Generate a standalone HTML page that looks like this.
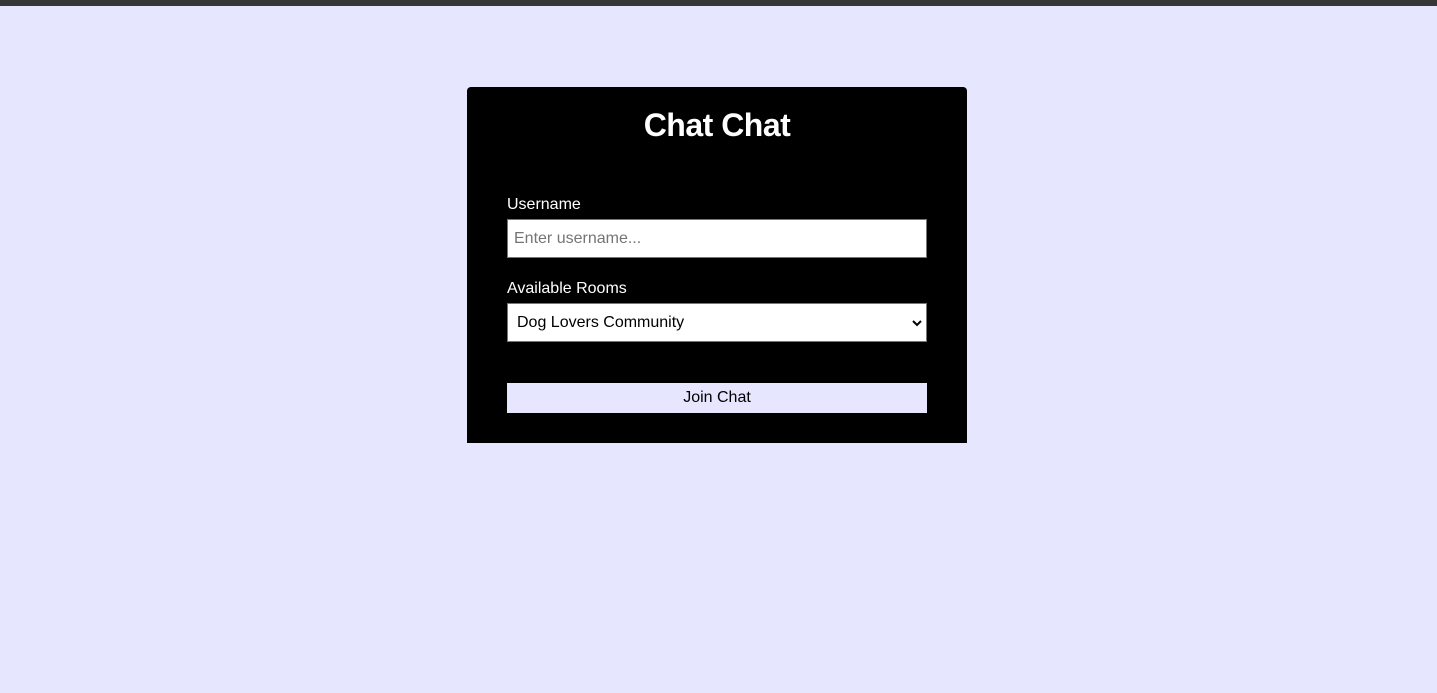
<!DOCTYPE html>
<html><head><meta charset="utf-8"><style>
html,body{margin:0;padding:0;}
body{width:1437px;height:693px;background:#e6e6ff;font-family:"Liberation Sans",Arial,sans-serif;position:relative;overflow:hidden;}
.top{position:absolute;left:0;top:0;width:1437px;height:6px;background:#373737;}
.card{position:absolute;left:467px;top:87px;width:500px;height:356px;background:#000;border-radius:4px 4px 0 0;}
h1{position:absolute;left:0;width:500px;top:20px;margin:0;text-align:center;color:#fff;font-size:32px;font-weight:bold;letter-spacing:-0.5px;}
.lbl{position:absolute;left:40px;color:#fff;font-size:16px;}
.box{position:absolute;left:40px;width:418px;height:37px;background:#fff;border:1px solid #767676;font-size:16px;line-height:38px;}
.btn{position:absolute;left:40px;top:296px;width:420px;height:30px;background:#e6e6ff;color:#000;text-align:center;line-height:30px;font-size:16px;}
</style></head><body>
<div class="top"></div>
<div class="card">
<h1>Chat Chat</h1>
<div class="lbl" style="top:109px">Username</div>
<div class="box" style="top:132px;color:#757575"><span style="padding-left:6px">Enter username...</span></div>
<div class="lbl" style="top:193px">Available Rooms</div>
<div class="box" style="top:216px;color:#000"><span style="padding-left:9px">Dog Lovers Community</span>
<svg style="position:absolute;right:4px;top:15px" width="10" height="8" viewBox="0 0 10 8"><path d="M1 2 L5 6 L9 2" stroke="#000" stroke-width="2" fill="none"/></svg></div>
<div class="btn">Join Chat</div>
</div>
</body></html>
